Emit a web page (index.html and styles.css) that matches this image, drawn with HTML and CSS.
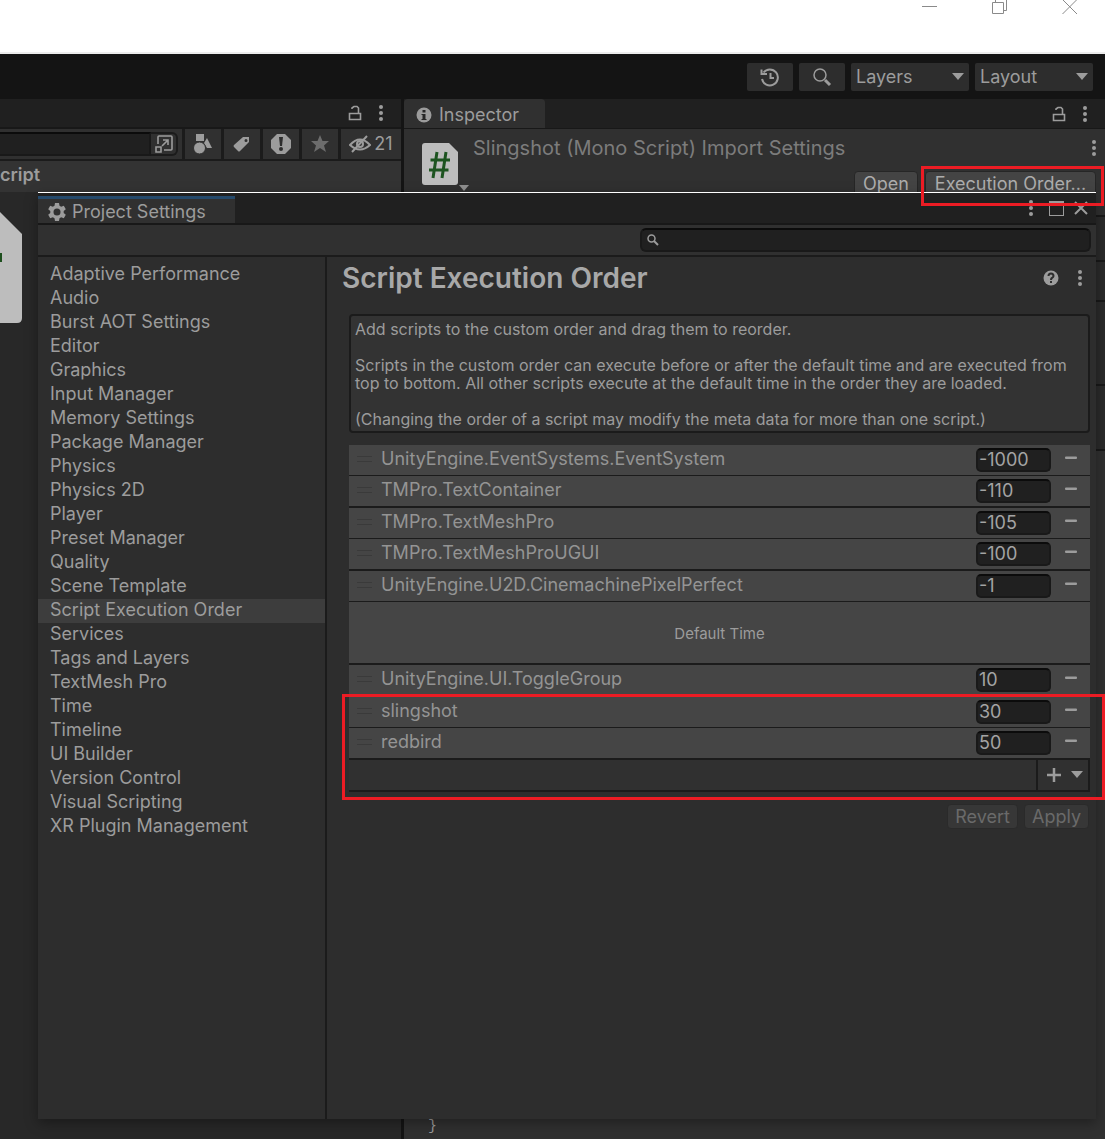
FILE: index.html
```html
<!DOCTYPE html>
<html lang="en">
<head>
<meta charset="utf-8">
<title>Project Settings</title>
<link rel="stylesheet" href="styles.css">
</head>
<body>
<svg class="sprites" aria-hidden="true">
  <symbol id="lock" viewBox="0 0 14 16"><path d="M4 4V3L6 1.500H9L10.500 3V8M1.500 8.500H12.500V14.500H1.500Z" fill="none" stroke="currentColor" stroke-width="1.600"/></symbol>
  <symbol id="kebab" viewBox="0 0 4 16"><circle cx="2" cy="2" r="2"/><circle cx="2" cy="8" r="2"/><circle cx="2" cy="14" r="2"/></symbol>
  <symbol id="caret" viewBox="0 0 12 8"><path d="M0 0H12L6 7Z"/></symbol>
  <symbol id="minus" viewBox="0 0 12 4"><rect y=".5" width="12" height="2.500" rx="1"/></symbol>
</svg>

<div class="desktop">
  <div class="editor">
    <header class="titlebar">
      <button class="sys" aria-label="Minimize"><svg width="16" height="16" viewBox="0 0 16 16"><path d="M0 7.500H15"/></svg></button>
      <button class="sys" aria-label="Restore"><svg width="16" height="16" viewBox="0 0 16 16"><path d="M.5 3.500H11.500V14.500H.5ZM3.500 3.500V.5H14.500V11.500H11.500"/></svg></button>
      <button class="sys" aria-label="Close"><svg width="16" height="16" viewBox="0 0 16 16"><path d="M.5 .5L15 15M15 .5L.5 15"/></svg></button>
    </header>

    <div class="toolbar">
      <button class="tool" aria-label="Undo history"><svg width="20" height="20" viewBox="0 0 20 20" fill="none" stroke="currentColor" stroke-width="2"><path d="M3.500 5.500A8 8 0 1 1 2 12M1.500 2.500V7H7M10.500 6V11H14"/></svg></button>
      <button class="tool" aria-label="Search"><svg width="20" height="20" viewBox="0 0 20 20" fill="none" stroke="currentColor"><circle cx="8" cy="8" r="6" stroke-width="1.500"/><path d="M13 13L18 18" stroke-width="3"/></svg></button>
      <div class="dropdown"><select aria-label="Layers"><option>Layers</option></select><svg width="12" height="8"><use href="#caret"/></svg></div>
      <div class="dropdown"><select aria-label="Layout"><option>Layout</option></select><svg width="12" height="8"><use href="#caret"/></svg></div>
    </div>

    <div class="panels">
      <section class="project">
        <div class="tabstrip">
          <button class="icon" aria-label="Lock"><svg width="14" height="16"><use href="#lock"/></svg></button>
          <button class="icon" aria-label="Panel menu"><svg width="4" height="16"><use href="#kebab"/></svg></button>
        </div>
        <div class="filters">
          <div class="query"><input type="text" aria-label="Search project"><button class="icon" aria-label="Open in search"><svg width="20" height="20" viewBox="0 0 20 20" fill="none" stroke="currentColor" stroke-width="1.600"><path d="M4 10V3Q4 2 5 2H17Q18 2 18 3V15Q18 16 17 16H10M2 13H7V18H2ZM8 12L14 6M9 6H14V11"/></svg></button></div>
          <button class="filter" aria-label="Filter by type"><svg width="20" height="20" viewBox="0 0 20 20" fill="currentColor"><rect x="3" y="0" width="8" height="7"/><path d="M14 4L19 14H14L11 9Z"/><circle cx="6.500" cy="14" r="6" stroke="#303030"/></svg></button>
          <button class="filter" aria-label="Filter by label"><svg width="18" height="18" viewBox="0 0 18 18" fill="currentColor"><path fill-rule="evenodd" d="M10 2H16V7L7 16Q6 17 5 16L1 12Q0 11 1 10ZM13 4A1.500 1.500 0 1 0 13 7A1.500 1.500 0 1 0 13 4"/></svg></button>
          <button class="filter" aria-label="Filter by import log"><svg width="20" height="20" viewBox="0 0 20 20"><path d="M6 0H14L20 6V14L14 20H6L0 14V6Z" fill="currentColor"/><path d="M8 3H12L11 12H9Z" fill="#2d2d2d"/><circle cx="10" cy="15" r="2" fill="#2d2d2d"/></svg></button>
          <button class="filter faded" aria-label="Save search"><svg width="18" height="18" viewBox="0 0 18 18" fill="currentColor"><path d="M9 0L11.500 6H18L13 10.500L15 17L9 13L3 17L5 10.500L0 6H6.500Z"/></svg></button>
          <button class="filter hidden-count"><svg width="22" height="18" viewBox="0 0 22 18" fill="none" stroke="currentColor" stroke-width="2"><path d="M1 10Q11 -1 21 10Q11 19 1 10ZM3 17L18 1"/><circle cx="11" cy="9" r="3"/></svg>21</button>
        </div>
        <div class="crumb">cript</div>
        <div class="assets">
          <svg width="24" height="112" viewBox="0 0 24 112"><path d="M0 0L22 22V106Q22 111 17 111H0Z" fill="#bdbdbd"/><rect y="41" width="2" height="9" fill="#1d4f1d"/></svg>
        </div>
      </section>

      <section class="inspector">
        <div class="tabstrip">
          <h2 class="tab"><svg width="16" height="16" viewBox="0 0 16 16"><circle cx="8" cy="8" r="7.500" fill="currentColor"/><path d="M6.500 3H9.500V5.500H6.500ZM5.500 7H9.500V12H10.500V13H5.500V12H6.500V8H5.500Z" fill="#262626"/></svg>Inspector</h2>
          <button class="icon" aria-label="Lock"><svg width="14" height="16"><use href="#lock"/></svg></button>
          <button class="icon" aria-label="Panel menu"><svg width="4" height="16"><use href="#kebab"/></svg></button>
        </div>
        <div class="asset-head">
          <svg class="script-icon" width="48" height="50" viewBox="0 0 48 50"><path d="M3 0H27L36 9V39Q36 42 33 42H3Q0 42 0 39V3Q0 0 3 0Z" fill="#bdbdbd"/><path d="M15 9L11 35M24 9L20 35M8.500 17H28M7 27H26.500" stroke="#1d5420" stroke-width="3" fill="none"/><path d="M37 42H47L42 48Z" fill="#8f8f8f"/></svg>
          <div class="asset-main">
            <div class="asset-title"><span>Slingshot (Mono Script) Import Settings</span><button class="icon" aria-label="Import settings menu"><svg width="4" height="16"><use href="#kebab"/></svg></button></div>
            <div class="asset-actions"><button class="push">Open</button><div class="marked"><button class="push">Execution Order...</button></div></div>
          </div>
        </div>
        <div class="bands"><div></div><div></div><div></div><div></div></div>
        <pre class="code">}</pre>
      </section>
    </div>
  </div>

  <main class="window">
    <div class="tabstrip">
      <h1 class="tab"><svg width="18" height="18" viewBox="0 0 18 18"><path fill="currentColor" fill-rule="evenodd" d="M7 0H11L11.500 2.700L13.200 3.700L15.800 2.800L17.800 6.200L15.700 8V10L17.800 11.800L15.800 15.200L13.200 14.300L11.500 15.300L11 18H7L6.500 15.300L4.800 14.300L2.200 15.200L.2 11.800L2.300 10V8L.2 6.200L2.200 2.800L4.800 3.700L6.500 2.700ZM9 5.500A3.500 3.500 0 1 0 9 12.500A3.500 3.500 0 1 0 9 5.500"/></svg>Project Settings</h1>
      <button class="icon" aria-label="Window menu"><svg width="4" height="16"><use href="#kebab"/></svg></button>
      <button class="icon" aria-label="Maximize"><svg width="16" height="16" viewBox="0 0 16 16"><path d="M0 1H15V16H0ZM1 4V15H14V4Z" fill="currentColor" fill-rule="evenodd"/></svg></button>
      <button class="icon" aria-label="Close window"><svg width="14" height="14" viewBox="0 0 14 14"><path d="M1 1L13 13M13 1L1 13" stroke="currentColor" stroke-width="2"/></svg></button>
    </div>
    <div class="searchbar">
      <div class="search"><svg width="12" height="12" viewBox="0 0 12 12" fill="none" stroke="currentColor"><circle cx="4.500" cy="4.500" r="3.500" stroke-width="1.500"/><path d="M7 7L11 11" stroke-width="2"/></svg><input type="search" aria-label="Search settings"></div>
    </div>
    <div class="body">
      <nav class="categories">
        <a href="#">Adaptive Performance</a>
        <a href="#">Audio</a>
        <a href="#">Burst AOT Settings</a>
        <a href="#">Editor</a>
        <a href="#">Graphics</a>
        <a href="#">Input Manager</a>
        <a href="#">Memory Settings</a>
        <a href="#">Package Manager</a>
        <a href="#">Physics</a>
        <a href="#">Physics 2D</a>
        <a href="#">Player</a>
        <a href="#">Preset Manager</a>
        <a href="#">Quality</a>
        <a href="#">Scene Template</a>
        <a href="#" class="selected" aria-current="page">Script Execution Order</a>
        <a href="#">Services</a>
        <a href="#">Tags and Layers</a>
        <a href="#">TextMesh Pro</a>
        <a href="#">Time</a>
        <a href="#">Timeline</a>
        <a href="#">UI Builder</a>
        <a href="#">Version Control</a>
        <a href="#">Visual Scripting</a>
        <a href="#">XR Plugin Management</a>
      </nav>
      <section class="content">
        <div class="heading">
          <h2>Script Execution Order</h2>
          <button class="icon" aria-label="Help"><svg width="16" height="16" viewBox="0 0 16 16"><circle cx="8" cy="8" r="7.500" fill="currentColor"/><path d="M5.500 6Q5.500 3.500 8 3.500T10.500 6Q10.500 7 9 8Q8 8.500 8 10M8 11V13" fill="none" stroke="#2d2d2d" stroke-width="2"/></svg></button>
          <button class="icon" aria-label="Settings menu"><svg width="4" height="16"><use href="#kebab"/></svg></button>
        </div>
        <div class="help">
          <p>Add scripts to the custom order and drag them to reorder.</p>
          <p>Scripts in the custom order can execute before or after the default time and are executed from top to bottom. All other scripts execute at the default time in the order they are loaded.</p>
          <p>(Changing the order of a script may modify the meta data for more than one script.)</p>
        </div>
        <div class="order">
          <div class="row"><i class="grip"></i><label for="o1">UnityEngine.EventSystems.EventSystem</label><input id="o1" type="text" value="-1000"><button class="icon" aria-label="Remove"><svg width="12" height="4"><use href="#minus"/></svg></button></div>
          <div class="row thick"><i class="grip"></i><label for="o2">TMPro.TextContainer</label><input id="o2" type="text" value="-110"><button class="icon" aria-label="Remove"><svg width="12" height="4"><use href="#minus"/></svg></button></div>
          <div class="row"><i class="grip"></i><label for="o3">TMPro.TextMeshPro</label><input id="o3" type="text" value="-105"><button class="icon" aria-label="Remove"><svg width="12" height="4"><use href="#minus"/></svg></button></div>
          <div class="row thick"><i class="grip"></i><label for="o4">TMPro.TextMeshProUGUI</label><input id="o4" type="text" value="-100"><button class="icon" aria-label="Remove"><svg width="12" height="4"><use href="#minus"/></svg></button></div>
          <div class="row"><i class="grip"></i><label for="o5">UnityEngine.U2D.CinemachinePixelPerfect</label><input id="o5" type="text" value="-1"><button class="icon" aria-label="Remove"><svg width="12" height="4"><use href="#minus"/></svg></button></div>
          <div class="default">Default Time</div>
          <div class="row thick"><i class="grip"></i><label for="o6">UnityEngine.UI.ToggleGroup</label><input id="o6" type="text" value="10"><button class="icon" aria-label="Remove"><svg width="12" height="4"><use href="#minus"/></svg></button></div>
          <div class="marked-rows">
            <div class="row"><i class="grip"></i><label for="o7">slingshot</label><input id="o7" type="text" value="30"><button class="icon" aria-label="Remove"><svg width="12" height="4"><use href="#minus"/></svg></button></div>
            <div class="row thick"><i class="grip"></i><label for="o8">redbird</label><input id="o8" type="text" value="50"><button class="icon" aria-label="Remove"><svg width="12" height="4"><use href="#minus"/></svg></button></div>
            <div class="foot"><button class="add" aria-label="Add script"><svg width="16" height="16" viewBox="0 0 16 16"><path d="M8 1V15M1 8H15" stroke="currentColor" stroke-width="2.500"/></svg><svg width="12" height="8"><use href="#caret"/></svg></button></div>
          </div>
        </div>
        <div class="actions"><button class="push" disabled>Revert</button><button class="push" disabled>Apply</button></div>
      </section>
    </div>
  </main>
</div>
</body>
</html>
```
FILE: styles.css
```css
* { box-sizing: border-box; }

body {
  margin: 0;
  background: #141414;
  color: #9c9c9c;
  font: 18px/24px Inter, "Liberation Sans", sans-serif;
  font-optical-sizing: none;
}

h1, h2, p, pre { margin: 0; font: inherit; font-optical-sizing: none; }
button, input, select { font: inherit; font-optical-sizing: none; color: inherit; border: 0; margin: 0; padding: 0; background: none; }
input { min-width: 0; outline: 0; }
svg { display: block; flex: none; fill: currentColor; }
.sprites { display: none; }
.icon { display: flex; align-items: center; justify-content: center; }

/* The editor and the floating settings window share one grid cell. */
.desktop { display: grid; grid-template: minmax(100vh, auto) / minmax(0, 1fr); overflow: hidden; }
.editor, .window { grid-area: 1 / 1; }
.editor { display: flex; flex-direction: column; }

.titlebar {
  display: flex;
  justify-content: flex-end;
  gap: 54px;
  height: 54px;
  padding-right: 27px;
  background: #fff;
  border-bottom: 2px solid #ececec;
}
.sys { height: 16px; width: 16px; margin-top: -1px; color: #8a8a8a; }
.sys svg { fill: none; stroke: currentColor; }

.toolbar { display: flex; justify-content: flex-end; gap: 6px; padding: 9px 12px 8px; }
.tool, .dropdown { height: 28px; background: #2d2d2d; border-radius: 2px; }
.tool { display: flex; align-items: center; justify-content: center; width: 46px; }
.tool svg { fill: none; }
.dropdown { display: flex; align-items: center; width: 118px; padding: 0 5px; }
.dropdown select { flex: 1; appearance: none; outline: 0; }

.panels { display: flex; flex: 1; gap: 3px; }
.project { display: flex; flex-direction: column; flex: 0 1 401px; min-width: 0; background: #282828; }
.inspector { display: flex; flex-direction: column; flex: 1; min-width: 0; background: #303030; }
.tabstrip { display: flex; align-items: center; justify-content: flex-end; gap: 17px; height: 30px; background: #202020; border-bottom: 2px solid #181818; }
.project .tabstrip { padding-right: 18px; }
.inspector .tabstrip { padding-right: 18px; border-bottom-width: 1px; }
.tab { display: flex; align-items: center; align-self: stretch; margin-right: auto; background: #303030; }
.inspector .tab { gap: 7px; width: 141px; padding: 2px 0 0 12px; border-radius: 4px 4px 0 0; }

.filters { display: flex; gap: 3px; height: 32px; background: #1b1b1b; border-bottom: 2px solid #1b1b1b; }
.query { display: flex; flex: 1; align-items: center; min-width: 0; padding: 3px 4px 3px 0; background: #303030; }
.query input { flex: 1; width: 0; align-self: stretch; background: #202020; border: 2px solid #191919; border-top-color: #0b0b0b; border-left: 0; }
.query .icon { width: 27px; align-self: stretch; border: 2px solid #1b1b1b; border-left: 0; border-radius: 0 6px 6px 0; }
.query .icon svg { fill: none; }
.filter { display: flex; align-items: center; justify-content: center; width: 36px; background: #303030; }
.faded { color: #6c6c6c; }
.hidden-count { width: 60px; gap: 3px; }
.hidden-count svg { fill: none; }
.crumb { height: 31px; background: #333; padding-top: 2px; font-weight: 600; }
.assets { padding-top: 20px; }

.asset-head { display: flex; gap: 3px; height: 88px; padding: 7px 9px 0 18px; border-bottom: 2px solid #191919; }
.script-icon { margin-top: 7px; }
.asset-main { flex: 1; min-width: 0; }
.asset-title { display: flex; justify-content: space-between; font-size: 20px; white-space: nowrap; color: #7c7c7c; }
.asset-title .icon { color: #9c9c9c; }
.asset-actions { display: flex; justify-content: flex-end; gap: 7px; padding-top: 11px; }
.push { height: 25px; padding: 0 8px; background: #444; border: 1px solid #262626; border-radius: 4px; line-height: 23px; color: #adadad; }
.marked { position: relative; }
.marked .push { width: 171px; white-space: nowrap; }
.marked::after { content: ""; position: absolute; z-index: 2; inset: -5px -8px -10px -4px; border: 3px solid #ec1c24; }
.bands div { height: 40px; background: #2b2b2b; border-bottom: 2px solid #191919; }
.bands div:first-child { height: 45px; }
.bands div:nth-child(3) { height: 84px; }
.bands div:last-child { height: 65px; }
.code { margin-top: auto; padding: 0 24px 2px; font: 15px/20px "Liberation Mono", monospace; }

.window {
  position: relative;
  z-index: 1;
  display: flex;
  flex-direction: column;
  margin: 192px 9px 20px 38px;
  background: #2d2d2d;
  border-top: 1px solid #fff;
  box-shadow: 0 4px 12px rgba(0, 0, 0, .35);
}
.window > .tabstrip { height: 32px; gap: 9px; padding: 3px 8px 0 0; }
.window .tab { gap: 6px; width: 197px; padding: 2px 0 0 10px; border-top: 3px solid #24496b; }
.window .tabstrip .icon { margin-bottom: 4px; }
.window .tabstrip .icon:nth-of-type(1) { margin-right: 7px; }

.searchbar { height: 32px; padding: 3px 5px; background: #303030; border-bottom: 2px solid #1b1b1b; }
.search { display: flex; align-items: center; gap: 6px; width: 43%; min-width: 180px; height: 24px; margin-left: auto; padding-left: 5px; background: #202020; border: 2px solid #191919; border-top-color: #0b0b0b; border-radius: 6px; }
.search svg { fill: none; }
.search input { flex: 1; appearance: none; height: 20px; }

.body { display: flex; flex: 1; }
.categories { flex: 0 0 289px; padding: 6px 0; border-right: 2px solid #1b1b1b; }
.categories a { display: block; height: 24px; padding-left: 12px; line-height: 22px; color: inherit; text-decoration: none; }
.categories .selected { background: #3d3d3d; }

.content { flex: 1; min-width: 0; padding: 0 6px 24px 22px; }
.heading { display: flex; align-items: center; gap: 19px; height: 42px; margin-left: -7px; padding-right: 8px; }
.heading h2 { flex: 1; font-size: 28px; font-weight: 600; line-height: 40px; color: #a8a8a8; }
.help { display: grid; gap: 18px; margin: 15px 0 12px; padding: 4px 4px 3px; background: #333; border: 2px solid #1b1b1b; border-radius: 4px; font-size: 16px; line-height: 18px; }

.row { display: flex; align-items: center; height: 31px; padding: 0 13px 0 8px; background: #454545; border-bottom: 1px solid #1b1b1b; }
.thick { height: 32px; border-bottom-width: 2px; }
.row .icon { padding-bottom: 4px; }
.grip { width: 15px; height: 6px; margin: 0 9px 3px 0; border: solid #3a3a3a; border-width: 1px 0; }
.row label { flex: 1; min-width: 0; line-height: 28px; padding-bottom: 2px; color: #949494; }
.row input { width: 75px; height: 24px; margin-right: 14px; padding-left: 1px; background: #202020; border: 2px solid #191919; border-top-color: #0b0b0b; border-radius: 5px; color: #a4a4a4; }
.default { display: flex; align-items: center; justify-content: center; height: 63px; padding-top: 2px; background: #454545; border-bottom: 2px solid #1b1b1b; font-size: 15px; }
.marked-rows { position: relative; }
.marked-rows::after { content: ""; position: absolute; inset: -3px -15px -8px -7px; border: 3px solid #ec1c24; pointer-events: none; }
.foot { display: flex; justify-content: flex-end; height: 32px; background: #303030; border-bottom: 2px solid #1b1b1b; }
.add { display: flex; align-items: center; gap: 9px; padding: 0 5px 0 8px; border: solid #1b1b1b; border-width: 0 2px; }

.actions { display: flex; justify-content: flex-end; gap: 6px; padding: 12px 1px 0 0; }
.actions .push { padding: 0 7px; background: #373737; border-color: #2a2a2a; color: #6a6a6a; }
```
